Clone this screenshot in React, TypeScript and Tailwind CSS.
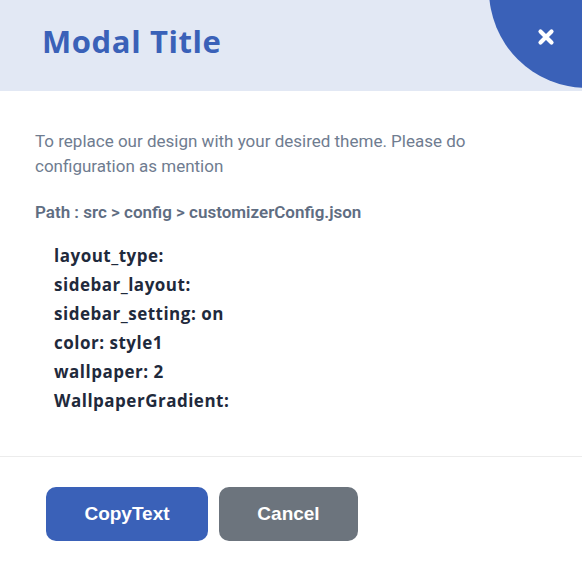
const items = [
  "layout_type:",
  "sidebar_layout:",
  "sidebar_setting: on",
  "color: style1",
  "wallpaper: 2",
  "WallpaperGradient:",
];

export default function App() {
  return (
    <div className="w-[582px] h-[568px] bg-white overflow-hidden">
      <div className="relative h-[91px] bg-[#e2e8f4] flex items-center pl-[42px] pb-[8px] overflow-hidden">
        <h2
          className="text-[31px] font-bold text-[#3a61b8] tracking-[0.6px]"
          style={{ fontFamily: '"Open Sans", sans-serif' }}
        >
          Modal Title
        </h2>
        <div className="absolute left-[489px] top-[-108px] w-[196px] h-[196px] rounded-full bg-[#3a61b8]" />
        <button className="absolute left-[536px] top-[27px] w-[20px] h-[20px] flex items-center justify-center">
          <svg width="18" height="18" viewBox="0 0 18 18">
            <path d="M3.5 3.5 L14.5 14.5 M14.5 3.5 L3.5 14.5" stroke="#fff" strokeWidth="4.2" strokeLinecap="round" />
          </svg>
        </button>
      </div>

      <div className="pl-[35px] pr-[30px] pt-[38px] pb-[41px]" style={{ fontFamily: "Roboto, sans-serif" }}>
        <p className="max-w-[450px] text-[17px] leading-[25px] text-[#6f7c90]">
          To replace our design with your desired theme. Please do configuration as mention
        </p>
        <p className="mt-[22px] text-[17px] leading-[22px] font-semibold text-[#5f6d82]">
          Path : src &gt; config &gt; customizerConfig.json
        </p>
        <ul className="mt-[18px] pl-[19px]" style={{ fontFamily: '"Open Sans", sans-serif' }}>
          {items.map((t) => (
            <li key={t} className="text-[17px] leading-[29px] font-bold text-[#1f2a3c] tracking-[0.5px]">
              {t}
            </li>
          ))}
        </ul>
      </div>

      <div className="border-t border-[#ececec] flex gap-[11px] pl-[46px] pt-[30px]" style={{ fontFamily: '"Liberation Sans", Arial, sans-serif' }}>
        <button className="w-[162px] h-[54px] rounded-[10px] bg-[#3a61b8] text-white text-[19px] font-bold">
          CopyText
        </button>
        <button className="w-[139px] h-[54px] rounded-[10px] bg-[#6c747d] text-white text-[19px] font-bold">
          Cancel
        </button>
      </div>
    </div>
  );
}
